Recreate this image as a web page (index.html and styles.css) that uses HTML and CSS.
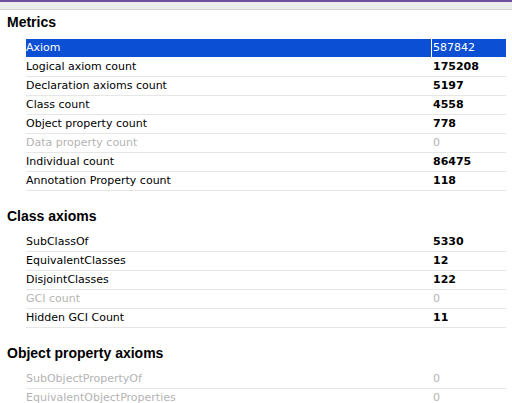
FILE: index.html
```html
<!DOCTYPE html>
<html>
<head>
<meta charset="utf-8">
<link rel="stylesheet" href="styles.css">
</head>
<body>
<div class="topbar"></div>
<div class="toolbar"></div>
<div class="content">
  <section class="section">
    <h2 class="heading">Metrics</h2>
    <div class="table">
      <div class="row selected"><span class="name">Axiom</span><span class="val">587842</span></div>
      <div class="row"><span class="name">Logical axiom count</span><span class="val">175208</span></div>
      <div class="row"><span class="name">Declaration axioms count</span><span class="val">5197</span></div>
      <div class="row"><span class="name">Class count</span><span class="val">4558</span></div>
      <div class="row"><span class="name">Object property count</span><span class="val">778</span></div>
      <div class="row disabled"><span class="name">Data property count</span><span class="val">0</span></div>
      <div class="row"><span class="name">Individual count</span><span class="val">86475</span></div>
      <div class="row"><span class="name">Annotation Property count</span><span class="val">118</span></div>
    </div>
  </section>
  <section class="section">
    <h2 class="heading">Class axioms</h2>
    <div class="table">
      <div class="row"><span class="name">SubClassOf</span><span class="val">5330</span></div>
      <div class="row"><span class="name">EquivalentClasses</span><span class="val">12</span></div>
      <div class="row"><span class="name">DisjointClasses</span><span class="val">122</span></div>
      <div class="row disabled"><span class="name">GCI count</span><span class="val">0</span></div>
      <div class="row"><span class="name">Hidden GCI Count</span><span class="val">11</span></div>
    </div>
  </section>
  <section class="section">
    <h2 class="heading">Object property axioms</h2>
    <div class="table">
      <div class="row disabled"><span class="name">SubObjectPropertyOf</span><span class="val">0</span></div>
      <div class="row disabled"><span class="name">EquivalentObjectProperties</span><span class="val">0</span></div>
      <div class="row disabled"><span class="name">InverseObjectProperties</span><span class="val">0</span></div>
    </div>
  </section>
</div>
</body>
</html>
```
FILE: styles.css
```css
html, body {
  margin: 0;
  padding: 0;
  background: #ffffff;
  overflow: hidden;
}
body {
  width: 512px;
  height: 403px;
}
.topbar {
  height: 2px;
  background: #6e4e9e;
}
.toolbar {
  height: 7px;
  background: #ececec;
  border-bottom: 1px solid #d2d2d2;
}
.content {
  padding: 0;
}
.section + .section {
  margin-top: 13px;
}
.heading {
  margin: 0;
  padding: 4px 0 9px 7px;
  font-family: "Liberation Sans", Arial, sans-serif;
  font-weight: bold;
  font-size: 14px;
  line-height: 16px;
  color: #000;
}
.table {
  margin-left: 26px;
  width: 480px;
}
.row {
  display: grid;
  grid-template-columns: 405px 1fr;
  height: 18px;
  border-bottom: 1px solid #e6e6e6;
  font-family: "DejaVu Sans", Verdana, sans-serif;
  font-size: 11px;
  line-height: 18px;
  color: #000;
}
.name {
  padding-left: 0;
  white-space: nowrap;
  overflow: hidden;
}
.val {
  padding-left: 2px;
  font-weight: bold;
  white-space: nowrap;
}
.row.selected {
  background: #0b4fd5;
  color: #ffffff;
  border-bottom-color: #ffffff;
}
.row.selected .val {
  border-left: 1px solid #ffffff;
  padding-left: 1px;
  font-weight: normal;
}
.row.disabled {
  color: #b4b4b4;
}
.row.disabled .val {
  font-weight: normal;
}
```
